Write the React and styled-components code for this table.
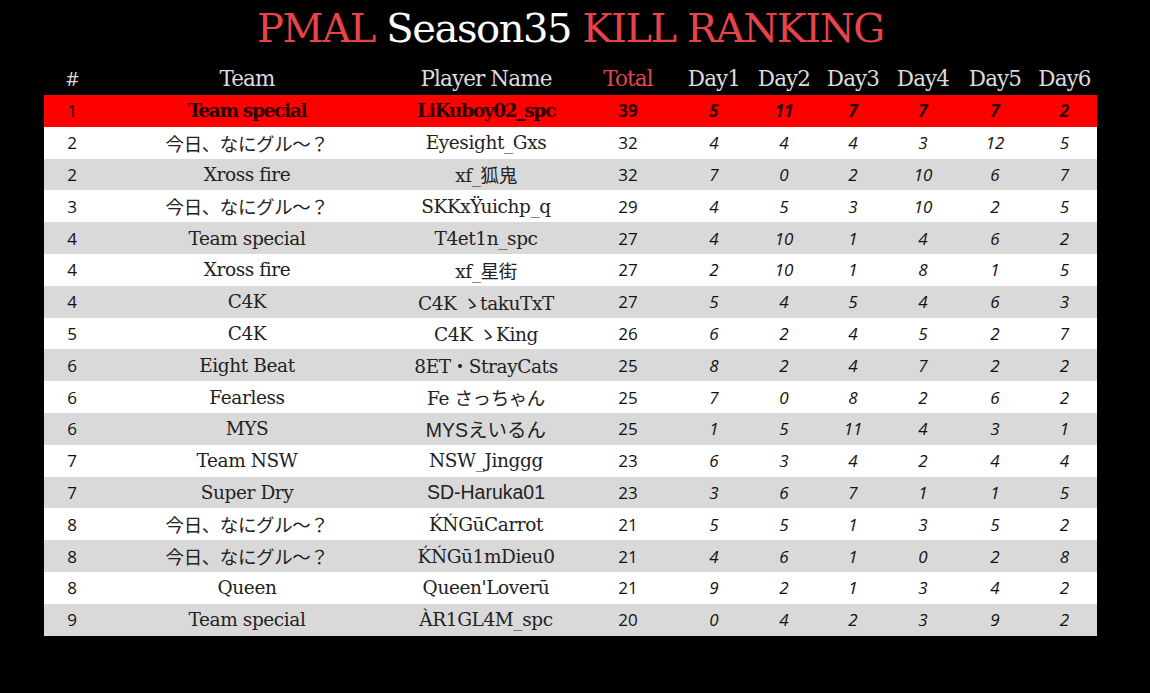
import styled, { createGlobalStyle } from 'styled-components';

const GlobalStyle = createGlobalStyle`
  html, body {
    margin: 0;
    padding: 0;
    background: #000000;
  }
`;

const COLS = '56px 294px 184px 100px 72px 68px 70px 70px 74px 65px';

const Page = styled.div`
  width: 1150px;
  height: 693px;
  background: #000000;
  padding-left: 44px;
  box-sizing: border-box;
  display: flex;
  flex-direction: column;
`;

const Title = styled.h1`
  margin: 0;
  width: 1053px;
  height: 62px;
  text-align: center;
  font-family: "DejaVu Serif", serif;
  font-weight: 400;
  font-size: 40px;
  line-height: 56px;
  letter-spacing: -1.4px;
  color: #ffffff;
`;

const Word = styled.span`
  font-family: "DejaVu Serif", serif;
  color: ${p => (p.$red ? '#e8434b' : '#ffffff')};
`;

const Row = styled.div`
  display: grid;
  grid-template-columns: ${COLS};
  width: 1053px;
  height: ${p => (p.$head ? '33px' : '31.8px')};
  align-items: center;
  background: ${p => p.$bg};
`;

const HeadCell = styled.div`
  text-align: center;
  font-family: "DejaVu Serif", serif;
  font-size: 21.5px;
  letter-spacing: -0.9px;
  color: ${p => (p.$red ? '#e0464f' : '#dcdcdc')};
  ${p => p.$sans && 'font-family: "Open Sans", sans-serif; font-size: 20px;'}
`;

const NameCell = styled.div`
  text-align: center;
  font-family: ${p => (p.$sans ? '"Liberation Sans"' : '"DejaVu Serif"')}, "Noto Sans CJK JP", serif;
  font-size: ${p => (p.$sans ? '19.5px' : '18.5px')};
  letter-spacing: ${p => (p.$sans ? '0' : p.$top ? '-1.3px' : '-0.4px')};
  font-weight: ${p => (p.$top ? 700 : 400)};
  color: ${p => (p.$top ? '#2a0000' : '#222222')};
  white-space: nowrap;
`;

const NumCell = styled.div`
  text-align: center;
  font-family: "Open Sans", sans-serif;
  font-size: 17px;
  font-style: ${p => (p.$italic ? 'italic' : 'normal')};
  font-weight: ${p => (p.$bold ? 700 : 400)};
  color: ${p => (p.$bold ? '#2a0000' : '#111111')};
`;

const rows = [
  ['1', 'Team special', 'LiKuboy02_spc', 39, [5, 11, 7, 7, 7, 2]],
  ['2', '今日、なにグル～？', 'Eyesight_Gxs', 32, [4, 4, 4, 3, 12, 5]],
  ['2', 'Xross fire', 'xf_狐鬼', 32, [7, 0, 2, 10, 6, 7]],
  ['3', '今日、なにグル～？', 'SKKxŸuichp_q', 29, [4, 5, 3, 10, 2, 5]],
  ['4', 'Team special', 'T4et1n_spc', 27, [4, 10, 1, 4, 6, 2]],
  ['4', 'Xross fire', 'xf_星街', 27, [2, 10, 1, 8, 1, 5]],
  ['4', 'C4K', 'C4K ゝtakuTxT', 27, [5, 4, 5, 4, 6, 3]],
  ['5', 'C4K', 'C4K ゝKing', 26, [6, 2, 4, 5, 2, 7]],
  ['6', 'Eight Beat', '8ET・StrayCats', 25, [8, 2, 4, 7, 2, 2]],
  ['6', 'Fearless', 'Fe さっちゃん', 25, [7, 0, 8, 2, 6, 2]],
  ['6', 'MYS', 'MYSえいるん', 25, [1, 5, 11, 4, 3, 1], true],
  ['7', 'Team NSW', 'NSW_Jinggg', 23, [6, 3, 4, 2, 4, 4]],
  ['7', 'Super Dry', 'SD-Haruka01', 23, [3, 6, 7, 1, 1, 5], true],
  ['8', '今日、なにグル～？', 'ḰŃGūCarrot', 21, [5, 5, 1, 3, 5, 2]],
  ['8', '今日、なにグル～？', 'ḰŃGū1mDieu0', 21, [4, 6, 1, 0, 2, 8]],
  ['8', 'Queen', "Queen'Loverū", 21, [9, 2, 1, 3, 4, 2]],
  ['9', 'Team special', 'ÀR1GL4M_spc', 20, [0, 4, 2, 3, 9, 2]],
];

const rowBg = i => (i === 0 ? '#ff0000' : i % 2 === 1 ? '#ffffff' : '#d9d9d9');

export default function App() {
  return (
    <Page>
      <GlobalStyle />
      <Title>
        <Word $red>PMAL</Word> <Word>Season35</Word> <Word $red>KILL RANKING</Word>
      </Title>
      <Row $head $bg="#000000">
        <HeadCell $sans>#</HeadCell>
        <HeadCell>Team</HeadCell>
        <HeadCell>Player Name</HeadCell>
        <HeadCell $red>Total</HeadCell>
        {[1, 2, 3, 4, 5, 6].map(d => (
          <HeadCell key={d}>Day{d}</HeadCell>
        ))}
      </Row>
      {rows.map(([rank, team, player, total, days, sans], i) => (
        <Row key={i} $bg={rowBg(i)}>
          <NumCell>{rank}</NumCell>
          <NameCell $top={i === 0}>{team}</NameCell>
          <NameCell $top={i === 0} $sans={sans}>{player}</NameCell>
          <NumCell $bold={i === 0}>{total}</NumCell>
          {days.map((d, j) => (
            <NumCell key={j} $italic $bold={i === 0}>{d}</NumCell>
          ))}
        </Row>
      ))}
    </Page>
  );
}
